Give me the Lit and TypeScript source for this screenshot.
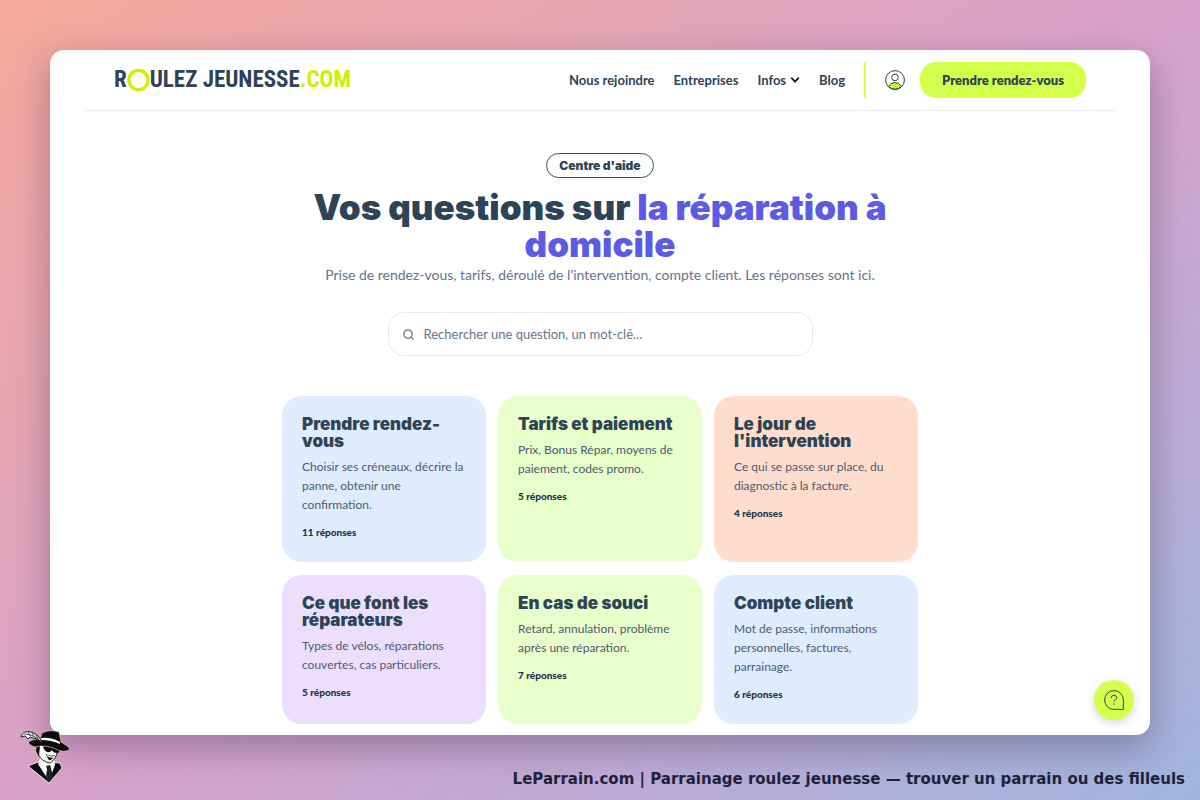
import { LitElement, html, css, svg } from "lit";
import { customElement } from "lit/decorators.js";

interface Topic {
  title: string;
  text: string;
  count: number;
  tone: string;
}

const TOPICS: Topic[] = [
  { title: "Prendre rendez-vous", text: "Choisir ses créneaux, décrire la panne, obtenir une confirmation.", count: 11, tone: "blue" },
  { title: "Tarifs et paiement", text: "Prix, Bonus Répar, moyens de paiement, codes promo.", count: 5, tone: "green" },
  { title: "Le jour de l'intervention", text: "Ce qui se passe sur place, du diagnostic à la facture.", count: 4, tone: "peach" },
  { title: "Ce que font les réparateurs", text: "Types de vélos, réparations couvertes, cas particuliers.", count: 5, tone: "violet" },
  { title: "En cas de souci", text: "Retard, annulation, problème après une réparation.", count: 7, tone: "green" },
  { title: "Compte client", text: "Mot de passe, informations personnelles, factures, parrainage.", count: 6, tone: "blue" },
];

const mascot = svg`
  <path d="M28 65 L38 61 L60 62 L62 67 L49 82 Z" fill="#0c0c0c" stroke="#fff" stroke-width="0.8"/>
  <path d="M40 57 L38 63 L49 80 L55 64 L54 58 Z" fill="#fff"/>
  <path d="M46 65 L50 64 L51 67 L53 76 L49 81 L46 75 L47 68 Z" fill="#222"/>
  <path d="M37 41 L38 53 Q42 61 50 62 Q56 59 59 46 Z" fill="#fff" stroke="#111" stroke-width="0.9"/>
  <path d="M37 42 L36 50 L39 55 L40 45 Z" fill="#111"/>
  <path d="M43 44 L51 46 L60 47 Q60 52 57 52 Q53 52 52 49 Q50 52 47 51 Q43 49 43 44 Z" fill="#080808"/>
  <path d="M46 53 Q51 56 55 54 Q52 60 49 59 Q47 57 46 53 Z" fill="#111"/>
  <path d="M47 54.500 Q51 57 54 55.500" stroke="#fff" stroke-width="1.200" fill="none"/>
  <path d="M28 41 Q32 38 40 38 L42 32 Q50 28 59 31 L61 41 Q68 45 70 48 Q66 52 58 49 Q46 43 35 46 Q30 45 28 41 Z" fill="#0c0c0c" stroke="#f4d9e6" stroke-width="0.6"/>
  <path d="M41 37 Q51 36 60 41 L60 43 Q51 39 41 39 Z" fill="#fff"/>
  <path d="M21 36 Q23 29 31 31 Q40 34 42 42 Q38 37 33 37 L30 36 L28 38 L25 35 Z" fill="#eee" stroke="#111" stroke-width="0.9"/>
  <path d="M24 33 Q34 33 41 41 M28 31 L30 35 M32 32 L34 36 M36 34 L38 38" stroke="#222" stroke-width="0.7" fill="none"/>
`;

@customElement("app-root")
export class AppRoot extends LitElement {
  static styles = css`
    :host {
      display: block;
      font-family: "Lato", "Liberation Sans", sans-serif;
      color: #2d4356;
    }
    * { box-sizing: border-box; }
    h1, h2, p { margin: 0; }
    a { color: inherit; text-decoration: none; }
    button { font: inherit; color: inherit; border: 0; cursor: pointer; }
    .stage {
      position: relative;
      height: 100vh;
      display: grid;
      grid-template-rows: minmax(0, 1fr) auto;
      padding: 50px 50px 0;
      overflow: hidden;
      background: linear-gradient(145deg, #f5a99b 0%, #d9a2cb 50%, #9fb5de 100%);
    }
    .window {
      position: relative;
      overflow: hidden;
      border-radius: 14px;
      background: #fff;
      box-shadow: 0 12px 36px rgba(30, 20, 50, 0.32);
    }
    .bar {
      display: flex;
      align-items: center;
      justify-content: space-between;
      margin: 0 34px;
      padding: 0 30px;
      height: 61px;
      border-bottom: 1px solid #e8eaee;
    }
    .logo {
      display: flex;
      align-items: center;
      font: bold 23px/32px "Liberation Sans Narrow", "Roboto Condensed", "DejaVu Sans Condensed", sans-serif;
    }
    .logo svg { display: block; }
    .dotcom { color: #ccf000; }
    .nav {
      display: flex;
      align-items: center;
      gap: 19px;
      font-size: 13px;
      font-weight: 700;
    }
    .nav a, .menu { display: flex; align-items: center; }
    .menu { gap: 4px; padding: 0; background: none; }
    .rule { width: 2px; height: 36px; background: #d4ff4a; }
    .account { margin-right: -4px; }
    .cta {
      height: 36px;
      padding: 0 22px;
      border-radius: 16px;
      background: #d4ff4a;
      font-weight: 800;
    }
    .hero {
      display: flex;
      flex-direction: column;
      align-items: center;
      padding: 42px 24px 0;
      text-align: center;
    }
    .tag {
      padding: 0 12px;
      border: 1px solid #46525e;
      border-radius: 13px;
      font: 900 12px/23px "Inter", sans-serif;
    }
    .title {
      max-width: 640px;
      margin-top: 11px;
      font: 900 35px/37px "Inter", sans-serif;
    }
    .accent { color: #5b5be6; }
    .lead {
      margin-top: 1px;
      font-size: 14px;
      line-height: 22px;
      color: #64748b;
    }
    .search {
      display: flex;
      align-items: center;
      gap: 10px;
      width: 100%;
      max-width: 425px;
      height: 44px;
      margin-top: 26px;
      padding: 0 14px;
      border: 1px solid #e6e9ee;
      border-radius: 16px;
    }
    .field {
      flex: 1;
      min-width: 0;
      padding: 0;
      border: 0;
      outline: 0;
      background: none;
      font: inherit;
      font-size: 13px;
      color: inherit;
    }
    .field::placeholder { color: #64748b; opacity: 1; }
    .topics {
      display: grid;
      grid-template-columns: repeat(3, minmax(0, 1fr));
      gap: 13px 12px;
      max-width: 636px;
      margin: 40px auto 0;
    }
    .card {
      display: block;
      padding: 20px;
      border-radius: 20px;
    }
    .card:hover { transform: translateY(-2px); }
    .blue { background: #deecfd; }
    .green { background: #e8ffcb; }
    .peach { background: #ffddcc; }
    .violet { background: #ebdffd; }
    .name { font: 900 17px/17px "Inter", sans-serif; }
    .text {
      margin-top: 7px;
      font-size: 12px;
      line-height: 19px;
      color: #4b5b70;
    }
    .count {
      margin-top: 8px;
      font-size: 10px;
      line-height: 20px;
      font-weight: 900;
      color: #1e3348;
    }
    .help {
      position: absolute;
      right: 16px;
      bottom: 15px;
      display: grid;
      place-items: center;
      width: 40px;
      height: 40px;
      padding: 0;
      border-radius: 50%;
      background: #d4ff4a;
      box-shadow: 0 3px 10px rgba(40, 60, 100, 0.2);
    }
    .caption {
      height: 65px;
      margin-right: -35px;
      padding-top: 32px;
      text-align: right;
      font: bold 15px/24px "DejaVu Sans", sans-serif;
      color: #1f2238;
      white-space: nowrap;
    }
    .mascot { position: absolute; left: 15px; bottom: 13px; }
  `;

  render() {
    return html`
      <div class="stage">
        <main class="window">
          <header class="bar">
            <a class="logo" href="#" aria-label="Roulez Jeunesse.com">
              <span>R</span>
              <svg width="23" height="24" viewBox="0 0 23 24" aria-hidden="true"><circle cx="11.5" cy="12" r="9.6" fill="none" stroke="#ccf000" stroke-width="3.2"/></svg>
              <span>ULEZ JEUNESSE</span><span class="dotcom">.COM</span>
            </a>
            <nav class="nav">
              <a href="#">Nous rejoindre</a>
              <a href="#">Entreprises</a>
              <button class="menu">Infos
                <svg width="10" height="8" viewBox="0 0 10 8" aria-hidden="true"><path d="M1.2 1.7 5 5.6 8.8 1.7" fill="none" stroke="#14202c" stroke-width="1.8"/></svg>
              </button>
              <a href="#">Blog</a>
              <span class="rule"></span>
              <a class="account" href="#" aria-label="Mon compte">
                <svg width="20" height="20" viewBox="0 0 20 20" fill="none" stroke="#2d4356"><path d="M3.6 16.6C5 13.8 7.3 12.6 10 12.6s5 1.2 6.4 4C14.700 18.500 12.500 19.300 10 19.300s-4.700-.8-6.400-2.700Z" fill="#c9f536"/><circle cx="10" cy="10" r="9.400"/><circle cx="10" cy="7.400" r="3.300"/></svg>
              </a>
              <button class="cta">Prendre rendez-vous</button>
            </nav>
          </header>
          <section class="hero">
            <span class="tag">Centre d'aide</span>
            <h1 class="title">Vos questions sur <span class="accent">la réparation à domicile</span></h1>
            <p class="lead">Prise de rendez-vous, tarifs, déroulé de l'intervention, compte client. Les réponses sont ici.</p>
            <label class="search">
              <svg width="11" height="11" viewBox="0 0 11 11" fill="none" stroke="#64748b" stroke-width="1.200" aria-hidden="true"><circle cx="5" cy="5" r="4.200"/><path d="m8.200 8.200 2.300 2.300"/></svg>
              <input class="field" type="search" aria-label="Rechercher" placeholder="Rechercher une question, un mot-clé..." />
            </label>
          </section>
          <section class="topics">
            ${TOPICS.map(
              (t) => html`<a class="card ${t.tone}" href="#">
                <h2 class="name">${t.title}</h2>
                <p class="text">${t.text}</p>
                <p class="count">${t.count} réponses</p>
              </a>`
            )}
          </section>
          <button class="help" aria-label="Aide">
            <svg width="20" height="20" viewBox="0 0 20 20" fill="none" stroke="#2d4356" aria-hidden="true"><path d="M10 .6a9.400 9.400 0 0 0 0 18.800h9.400V10A9.400 9.400 0 0 0 10 .6Z"/><path d="M7.300 8c0-1.700 1.200-2.700 2.700-2.700s2.700 1 2.700 2.500c0 2-2.700 2-2.700 4M10 13.500v1.300"/></svg>
          </button>
        </main>
        <footer class="caption">LeParrain.com | Parrainage roulez jeunesse — trouver un parrain ou des filleuls</footer>
        <svg class="mascot" width="60" height="60" viewBox="15 26 60 60" aria-hidden="true">${mascot}</svg>
      </div>
    `;
  }
}
